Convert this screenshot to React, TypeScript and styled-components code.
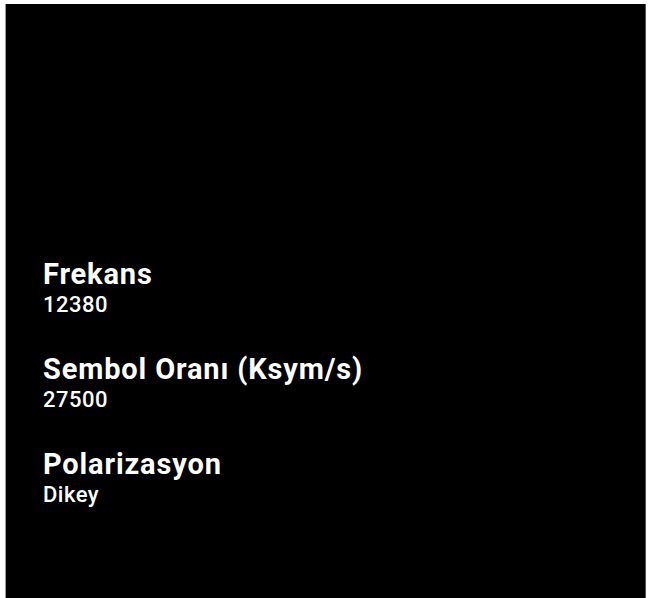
import styled, { createGlobalStyle } from 'styled-components'

const GlobalStyle = createGlobalStyle`
  html, body {
    margin: 0;
    padding: 0;
    background: #ffffff;
  }
  body {
    font-family: Roboto, "Noto Sans", sans-serif;
  }
`

const Frame = styled.div`
  box-sizing: border-box;
  width: 648px;
  height: 598px;
  padding: 4px 2px 0 5px;
  background: #ffffff;
  display: flex;
`

const Screen = styled.div`
  flex: 1;
  background: #000000;
  border-left: 1px solid #9a9a9a;
  border-right: 1px solid #555555;
  display: flex;
  flex-direction: column;
  justify-content: flex-start;
  padding: 253px 0 0 37px;
  gap: 33px;
`

const Item = styled.div`
  display: flex;
  flex-direction: column;
  color: #ffffff;
`

const Label = styled.div`
  font-size: 29px;
  font-weight: 700;
  line-height: 34px;
  letter-spacing: 0.85px;
`

const Value = styled.div`
  font-size: 22px;
  font-weight: 500;
  line-height: 28px;
  letter-spacing: 0.5px;
`

const rows = [
  { label: 'Frekans', value: '12380' },
  { label: 'Sembol Oranı (Ksym/s)', value: '27500' },
  { label: 'Polarizasyon', value: 'Dikey' },
]

export default function App() {
  return (
    <>
      <GlobalStyle />
      <Frame>
        <Screen>
          {rows.map((r) => (
            <Item key={r.label}>
              <Label>{r.label}</Label>
              <Value>{r.value}</Value>
            </Item>
          ))}
        </Screen>
      </Frame>
    </>
  )
}
